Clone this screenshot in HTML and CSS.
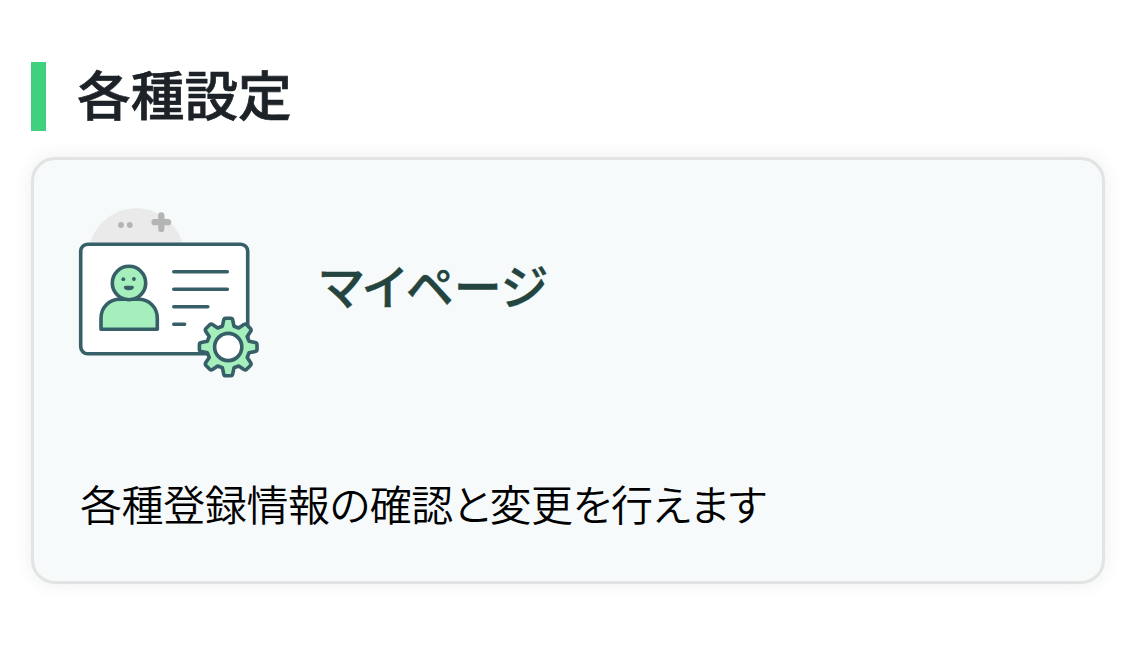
FILE: index.html
```html
<!DOCTYPE html>
<html lang="ja">
<head>
    <meta charset="utf-8">
    <title>各種設定</title>
    <link rel="stylesheet" href="styles.css">
</head>
<body>
    <h2 class="heading">各種設定</h2>
    <a class="card">
        <div class="card-head">
            <svg class="card-icon" viewBox="0 0 182 172" fill="none" stroke="#365f68" stroke-width="3.6" stroke-linecap="round" stroke-linejoin="round">
                <circle cx="58.3" cy="49.4" r="48.1" fill="#eaeaea" stroke="none"/>
                <g fill="#b3b5b4" stroke="none">
                    <circle cx="43" cy="18" r="2.9"/>
                    <circle cx="51.8" cy="18" r="2.9"/>
                </g>
                <path d="M76.5 15.2h13.6M83.3 8.4v13.6" stroke="#b3b5b4" stroke-width="6.2"/>
                <rect x="2.7" y="37.3" width="167" height="109.4" rx="7" fill="#fff"/>
                <path d="M95.8 64.7h53.5M95.8 82.3h53.5M95.8 99.7h34M95.8 117.2h10.8"/>
                <path d="M23 122.3v-11c0-11 8-19 19-19h18.3c11 0 19 8 19 19v11z" fill="#a5efbd"/>
                <circle cx="51" cy="76" r="16.7" fill="#a5efbd"/>
                <g fill="#365f68" stroke="none">
                    <circle cx="45.3" cy="72.2" r="1.9"/>
                    <circle cx="55.9" cy="72" r="1.9"/>
                </g>
                <path d="M47.6 80.5c1.5 1.4 5 1.4 6.5 0z"/>
                <g transform="translate(150.2 140)">
                    <path fill="#a5efbd" d="M-5.8-20.8L-4.5-27Q-4.1-28.8-2.5-28.8H2.5Q4.1-28.8 4.5-27L5.8-20.8L10.5-19L15.7-22.5Q17.3-23.4 18.5-22.2L22.2-18.5Q23.4-17.3 22.5-15.7L19-10.5L20.8-5.8L27-4.5Q28.8-4.1 28.8-2.5V2.5Q28.8 4.1 27 4.5L20.8 5.8L19 10.5L22.5 15.7Q23.4 17.3 22.2 18.5L18.5 22.2Q17.3 23.4 15.7 22.5L10.5 19L5.8 20.8L4.5 27Q4.1 28.8 2.5 28.8H-2.5Q-4.1 28.8-4.5 27L-5.8 20.8L-10.5 19L-15.7 22.5Q-17.3 23.4-18.5 22.2L-22.2 18.5Q-23.4 17.3-22.5 15.7L-19 10.5L-20.8 5.8L-27 4.5Q-28.8 4.1-28.8 2.5V-2.5Q-28.8-4.1-27-4.5L-20.8-5.8L-19-10.5L-22.5-15.7Q-23.4-17.3-22.2-18.5L-18.5-22.2Q-17.3-23.4-15.7-22.5L-10.5-19Z"/>
                    <circle r="13.6" fill="#fff"/>
                </g>
            </svg>
            <h3 class="card-title">マイページ</h3>
        </div>
        <p class="card-text">各種登録情報の確認と変更を行えます</p>
    </a>
</body>
</html>
```

FILE: styles.css
```css
* {
    box-sizing: border-box;
}
body {
    margin: 0;
    padding: 62px 28px 0 31px;
    min-height: 100vh;
    background: #fff;
    font-family: "Noto Sans CJK JP", sans-serif;
    font-feature-settings: "palt";
}
.heading {
    margin: 0 0 26px;
    padding-left: 31px;
    height: 69px;
    border-left: 15px solid #40d17f;
    color: #1c2227;
    font-size: 53.7px;
    font-weight: 500;
    line-height: 61px;
    -webkit-text-stroke: 0.7px;
}
.card {
    display: block;
    height: 427px;
    padding: 47px 44px;
    border: 3px solid #e2e4e3;
    border-radius: 24px;
    background: #f6fafb;
    box-shadow: 0 0 18px rgba(30, 70, 40, 0.09);
}
.card-head {
    display: flex;
    gap: 60px;
}
.card-icon {
    width: 182px;
    height: 172px;
    flex: none;
}
.card-title {
    margin: 41px 0 0;
    color: #24453f;
    font-size: 48px;
    font-weight: 500;
    line-height: 72px;
    -webkit-text-stroke: 0.4px;
}
.card-text {
    margin: 92px 0 0 2px;
    color: #000;
    font-size: 42px;
    font-weight: 350;
    letter-spacing: -0.4px;
    line-height: 64px;
}
```
